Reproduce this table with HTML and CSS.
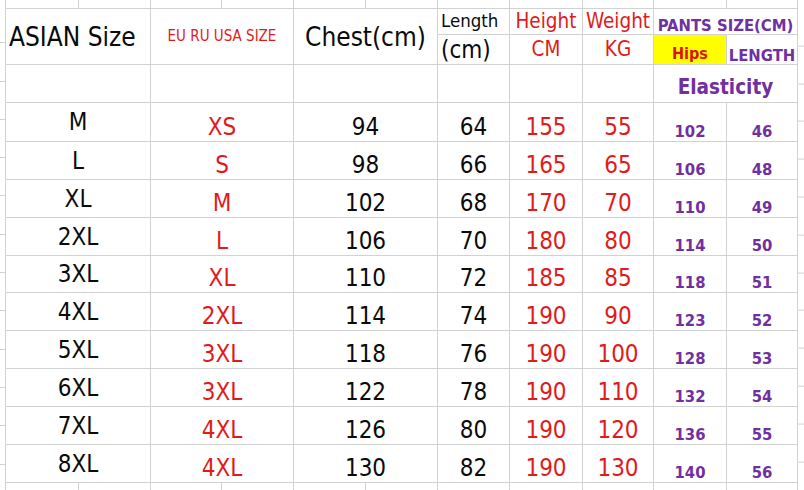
FILE: index.html
```html
<!DOCTYPE html>
<html>
<head>
<meta charset="utf-8">
<link rel="stylesheet" href="styles.css">
</head>
<body>
<div class="sheet">
  <div class="strip-left"></div>
  <div class="strip-right"></div>

  <div class="c"></div><div class="c"></div><div class="c"></div><div class="c"></div><div class="c"></div><div class="c"></div><div class="c"></div><div class="c"></div><div class="c"></div><div class="c"></div><div class="c"></div>

  <div class="c s22 hd-asian">ASIAN Size</div>
  <div class="c s22 hd-eu">EU RU USA SIZE</div>
  <div class="c s22 hd-chest">Chest(cm)</div>
  <div class="c hd-len">Length</div>
  <div class="c hd-red">Height</div>
  <div class="c hd-red">Weight</div>
  <div class="c s2 hd-pants">PANTS SIZE(CM)</div>

  <div class="c hd-lencm">(cm)</div>
  <div class="c hd-unit">CM</div>
  <div class="c hd-unit">KG</div>
  <div class="c hd-hips">Hips</div>
  <div class="c hd-length">LENGTH</div>

  <div class="c s2"></div><div class="c s2"></div><div class="c s2"></div><div class="c"></div><div class="c"></div><div class="c"></div>
  <div class="c s2 hd-elastic">Elasticity</div>

  <div class="c s2 d-asian">M</div><div class="c s2 d-red">XS</div><div class="c s2 d-blk">94</div><div class="c d-blk">64</div><div class="c d-red">155</div><div class="c d-red">55</div><div class="c d-pur">102</div><div class="c d-pur">46</div>
  <div class="c s2 d-asian">L</div><div class="c s2 d-red">S</div><div class="c s2 d-blk">98</div><div class="c d-blk">66</div><div class="c d-red">165</div><div class="c d-red">65</div><div class="c d-pur">106</div><div class="c d-pur">48</div>
  <div class="c s2 d-asian">XL</div><div class="c s2 d-red">M</div><div class="c s2 d-blk">102</div><div class="c d-blk">68</div><div class="c d-red">170</div><div class="c d-red">70</div><div class="c d-pur">110</div><div class="c d-pur">49</div>
  <div class="c s2 d-asian">2XL</div><div class="c s2 d-red">L</div><div class="c s2 d-blk">106</div><div class="c d-blk">70</div><div class="c d-red">180</div><div class="c d-red">80</div><div class="c d-pur">114</div><div class="c d-pur">50</div>
  <div class="c s2 d-asian">3XL</div><div class="c s2 d-red">XL</div><div class="c s2 d-blk">110</div><div class="c d-blk">72</div><div class="c d-red">185</div><div class="c d-red">85</div><div class="c d-pur">118</div><div class="c d-pur">51</div>
  <div class="c s2 d-asian">4XL</div><div class="c s2 d-red">2XL</div><div class="c s2 d-blk">114</div><div class="c d-blk">74</div><div class="c d-red">190</div><div class="c d-red">90</div><div class="c d-pur">123</div><div class="c d-pur">52</div>
  <div class="c s2 d-asian">5XL</div><div class="c s2 d-red">3XL</div><div class="c s2 d-blk">118</div><div class="c d-blk">76</div><div class="c d-red">190</div><div class="c d-red">100</div><div class="c d-pur">128</div><div class="c d-pur">53</div>
  <div class="c s2 d-asian">6XL</div><div class="c s2 d-red">3XL</div><div class="c s2 d-blk">122</div><div class="c d-blk">78</div><div class="c d-red">190</div><div class="c d-red">110</div><div class="c d-pur">132</div><div class="c d-pur">54</div>
  <div class="c s2 d-asian">7XL</div><div class="c s2 d-red">4XL</div><div class="c s2 d-blk">126</div><div class="c d-blk">80</div><div class="c d-red">190</div><div class="c d-red">120</div><div class="c d-pur">136</div><div class="c d-pur">55</div>
  <div class="c s2 d-asian">8XL</div><div class="c s2 d-red">4XL</div><div class="c s2 d-blk">130</div><div class="c d-blk">82</div><div class="c d-red">190</div><div class="c d-red">130</div><div class="c d-pur">140</div><div class="c d-pur">56</div>

  <div class="c"></div><div class="c"></div><div class="c"></div><div class="c"></div><div class="c"></div><div class="c"></div><div class="c"></div><div class="c"></div><div class="c"></div><div class="c"></div><div class="c"></div>
</div>
</body>
</html>
```

FILE: styles.css
```css
html, body {
  margin: 0;
  padding: 0;
  background: #ffffff;
}

.sheet {
  width: 804px;
  height: 490px;
  display: grid;
  grid-template-columns: 5px 72px 71px 70px 71px 71px 71px 71px 72px 70px 72px 70px 6px;
  grid-template-rows: 8px 25px 29px 37px 38px 37px 37px 37px 36px 37px 37px 37px 37px 37px 7px;
  gap: 1px;
  background: #d2d2d2;
  overflow: hidden;
  font-family: "DejaVu Sans Condensed", "DejaVu Sans", sans-serif;
  font-stretch: semi-condensed;
  color: #0a0a0a;
}

.strip-left {
  grid-column: 1;
  grid-row: 1 / -1;
  background: repeating-linear-gradient(to bottom, #ffffff 0 37.3px, #d2d2d2 37.3px 38.3px);
  background-position: 0 5px;
}

.strip-right {
  grid-column: 13;
  grid-row: 1 / -1;
  background: repeating-linear-gradient(to bottom, #ffffff 0 36.8px, #d2d2d2 36.8px 37.8px);
  background-position: 0 8.6px;
}

.c {
  background: #ffffff;
  display: flex;
  justify-content: center;
  align-items: center;
  line-height: 1;
  white-space: nowrap;
}

.s2 { grid-column: span 2; }
.s22 { grid-column: span 2; grid-row: span 2; }

.hd-asian {
  font-size: 26px;
  justify-content: flex-start;
  padding-left: 3px;
}

.hd-eu {
  font-size: 15px;
  color: #e01b1b;
}

.hd-chest {
  font-size: 26px;
}

.hd-len {
  font-size: 18.5px;
  justify-content: flex-start;
  padding-left: 3px;
}

.hd-lencm {
  font-size: 24px;
  justify-content: flex-start;
  padding-left: 3px;
}

.hd-red,
.hd-unit {
  font-size: 20.5px;
  color: #e01b1b;
}

.hd-pants {
  font-size: 16.5px;
  font-weight: bold;
  color: #7030a0;
  align-items: flex-end;
}

.hd-hips {
  background: #ffff00;
  font-size: 16px;
  font-weight: bold;
  color: #dd1111;
  align-items: flex-end;
  padding-bottom: 2px;
}

.hd-length {
  font-size: 16.5px;
  font-weight: bold;
  color: #7030a0;
  align-items: flex-end;
}

.hd-elastic {
  font-size: 20.5px;
  font-weight: bold;
  color: #7030a0;
  align-items: flex-end;
  padding-bottom: 5px;
}

.d-asian {
  font-size: 24px;
}

.d-red,
.d-blk {
  font-size: 24px;
  align-items: flex-end;
  padding-bottom: 2px;
}

.d-red { color: #e01b1b; }

.d-pur {
  font-size: 16.5px;
  font-weight: bold;
  color: #7030a0;
  align-items: flex-end;
  padding-bottom: 1px;
}
```
